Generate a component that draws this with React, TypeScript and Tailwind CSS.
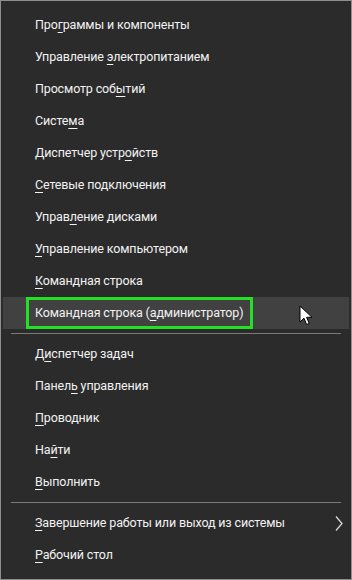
import React from "react";

type Item = { pre: string; u: string; post: string; arrow?: boolean; active?: boolean };

const g1: Item[] = [
  { pre: "Про", u: "г", post: "раммы и компоненты" },
  { pre: "Управление ", u: "э", post: "лектропитанием" },
  { pre: "Просмотр соб", u: "ы", post: "тий" },
  { pre: "Систе", u: "м", post: "а" },
  { pre: "Диспетчер устр", u: "о", post: "йств" },
  { pre: "", u: "С", post: "етевые подключения" },
  { pre: "Управ", u: "л", post: "ение дисками" },
  { pre: "", u: "У", post: "правление компьютером" },
  { pre: "", u: "К", post: "омандная строка" },
  { pre: "Командная строка (", u: "а", post: "дминистратор)", active: true },
];
const g2: Item[] = [
  { pre: "Д", u: "и", post: "спетчер задач" },
  { pre: "Панел", u: "ь", post: " управления" },
  { pre: "", u: "П", post: "роводник" },
  { pre: "На", u: "й", post: "ти" },
  { pre: "", u: "В", post: "ыполнить" },
];
const g3: Item[] = [
  { pre: "", u: "З", post: "авершение работы или выход из системы", arrow: true },
  { pre: "", u: "Р", post: "абочий стол" },
];

function Label({ it }: { it: Item }) {
  return (
    <span className="whitespace-pre">
      {it.pre}
      <span className="underline underline-offset-[3px] decoration-1">{it.u}</span>
      {it.post}
    </span>
  );
}

function Row({ it }: { it: Item }) {
  if (it.active) {
    return (
      <div className="relative h-[32px] flex items-center bg-[#414141]">
        <div className="ml-[23px] h-full flex items-center border-[3px] border-[#24e024] pl-[6px] pr-[7px] pt-[1px]">
          <Label it={it} />
        </div>
        <svg
          className="absolute left-[296px] top-[8px]"
          width="15"
          height="22"
          viewBox="0 0 15 22"
        >
          <path
            d="M1 1 L1 17 L5 13.2 L7.6 19.5 L10.2 18.4 L7.6 12.3 L13 12.3 Z"
            fill="#ffffff"
            stroke="#000000"
            strokeWidth="1"
            strokeLinejoin="round"
          />
        </svg>
      </div>
    );
  }
  return (
    <div className="relative h-[32px] flex items-center pl-[32px] pt-[1px]">
      <Label it={it} />
      {it.arrow && (
        <svg
          className="absolute left-[331px] top-[8px]"
          width="10"
          height="17"
          viewBox="0 0 10 17"
        >
          <path d="M2 1.5 L8 8.5 L2 15.5" fill="none" stroke="#d8d8d8" strokeWidth="1.3" />
        </svg>
      )}
    </div>
  );
}

function Sep() {
  return (
    <div className="h-[9px] flex items-center px-[8px]">
      <div className="h-px w-full bg-[#7a7a7a]" />
    </div>
  );
}

export default function App() {
  return (
    <div
      className="w-[352px] h-[580px] bg-[#2b2b2b] border border-[#8f8f8f] text-[#f2f2f2] text-[12.5px] tracking-[-0.15px] pt-[8px] px-[2px] overflow-hidden"
      style={{ fontFamily: 'Roboto, "Liberation Sans", sans-serif' }}
    >
      {g1.map((it, i) => (
        <Row key={"a" + i} it={it} />
      ))}
      <Sep />
      {g2.map((it, i) => (
        <Row key={"b" + i} it={it} />
      ))}
      <Sep />
      {g3.map((it, i) => (
        <Row key={"c" + i} it={it} />
      ))}
    </div>
  );
}
